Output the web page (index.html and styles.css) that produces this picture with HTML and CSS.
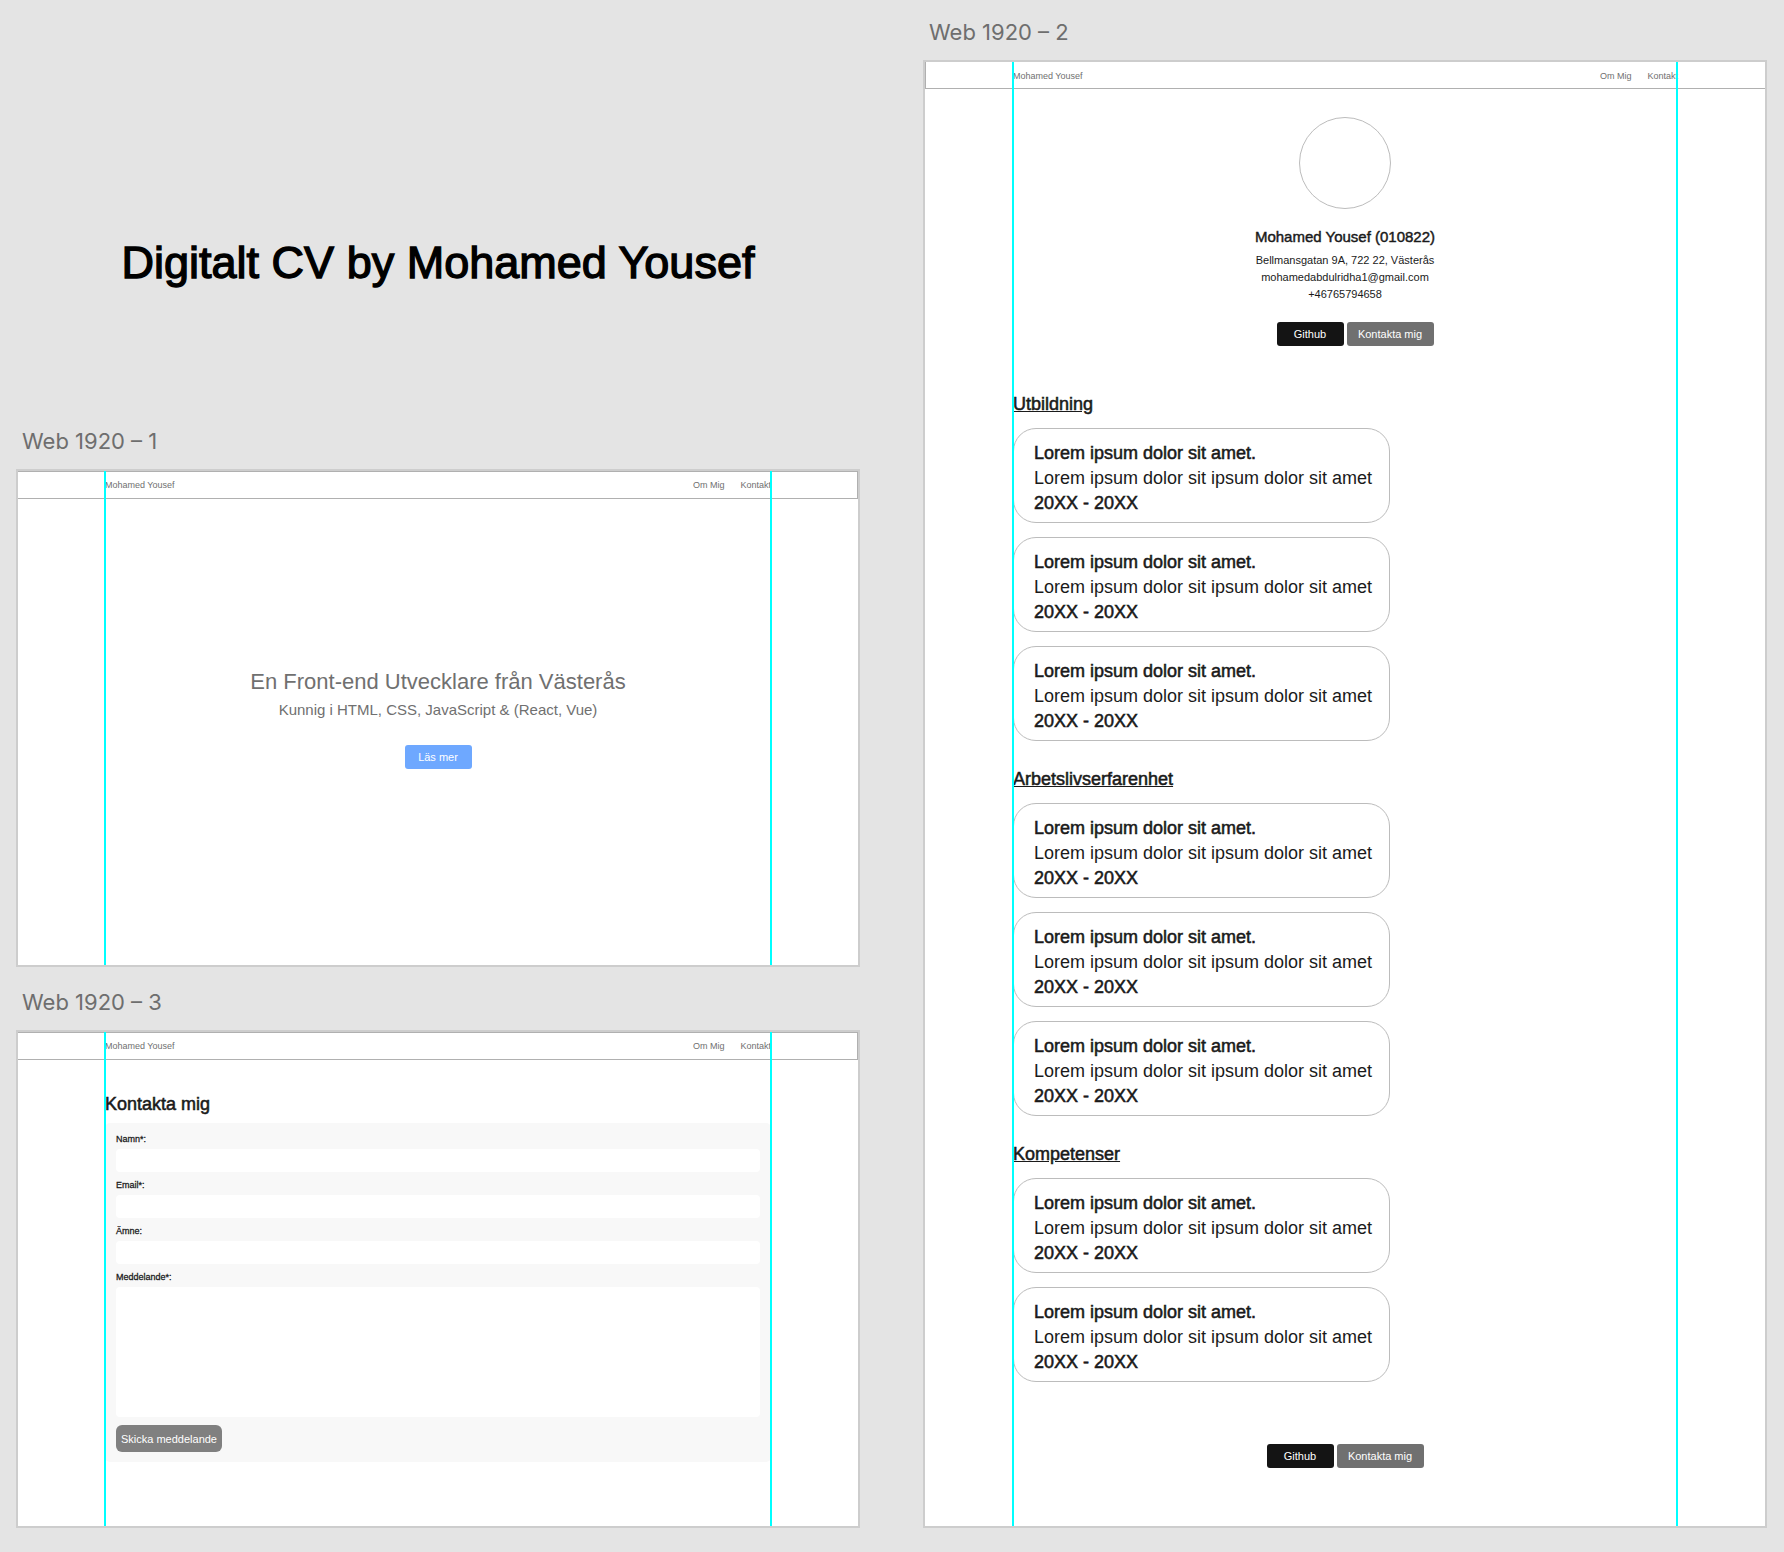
FILE: index.html
```html
<!DOCTYPE html>
<html lang="sv">
<head>
<meta charset="utf-8">
<meta name="viewport" content="width=device-width, initial-scale=1">
<title>Digitalt CV by Mohamed Yousef</title>
<link rel="stylesheet" href="styles.css">
</head>
<body>
<main class="canvas">
  <div class="column">
    <h1 class="title">Digitalt CV by Mohamed Yousef</h1>

    <p class="board-label">Web 1920 – 1</p>
    <section class="board board-wide">
      <header class="topbar">
        <a class="topbar-link" href="#">Mohamed Yousef</a>
        <nav class="topnav">
          <a class="topbar-link" href="#om">Om Mig</a>
          <a class="topbar-link" href="#kontakt">Kontakt</a>
        </nav>
      </header>
      <div class="hero">
        <h2 class="hero-title">En Front-end Utvecklare från Västerås</h2>
        <p class="hero-text">Kunnig i HTML, CSS, JavaScript &amp; (React, Vue)</p>
        <button class="button button-blue" type="button">Läs mer</button>
      </div>
    </section>

    <p class="board-label board-label-next">Web 1920 – 3</p>
    <section class="board board-wide" id="kontakt">
      <header class="topbar">
        <a class="topbar-link" href="#">Mohamed Yousef</a>
        <nav class="topnav">
          <a class="topbar-link" href="#om">Om Mig</a>
          <a class="topbar-link" href="#kontakt">Kontakt</a>
        </nav>
      </header>
      <div class="contact">
        <h2 class="heading">Kontakta mig</h2>
        <form class="form">
          <div class="field">
            <label class="label" for="namn">Namn*:</label>
            <input class="input" id="namn" type="text">
          </div>
          <div class="field">
            <label class="label" for="email">Email*:</label>
            <input class="input" id="email" type="email">
          </div>
          <div class="field">
            <label class="label" for="amne">Ämne:</label>
            <input class="input" id="amne" type="text">
          </div>
          <div class="field">
            <label class="label" for="meddelande">Meddelande*:</label>
            <textarea class="input textarea" id="meddelande"></textarea>
          </div>
          <button class="button button-send" type="button">Skicka meddelande</button>
        </form>
      </div>
    </section>
  </div>

  <div class="column">
    <p class="board-label">Web 1920 – 2</p>
    <section class="board board-tall" id="om">
      <header class="topbar">
        <a class="topbar-link" href="#">Mohamed Yousef</a>
        <nav class="topnav">
          <a class="topbar-link" href="#om">Om Mig</a>
          <a class="topbar-link" href="#kontakt">Kontakt</a>
        </nav>
      </header>
      <div class="profile">
        <div class="avatar"></div>
        <h2 class="name">Mohamed Yousef (010822)</h2>
        <address class="address">Bellmansgatan 9A, 722 22, Västerås<br>mohamedabdulridha1@gmail.com<br>+46765794658</address>
        <div class="actions actions-profile">
          <button class="button button-dark" type="button">Github</button>
          <button class="button button-gray" type="button">Kontakta mig</button>
        </div>
      </div>
      <div class="resume">
        <section class="group">
          <h3 class="heading underlined">Utbildning</h3>
          <article class="card">
            <h4 class="card-title">Lorem ipsum dolor sit amet.</h4>
            <p class="card-text">Lorem ipsum dolor sit ipsum dolor sit amet</p>
            <p class="card-title">20XX - 20XX</p>
          </article>
          <article class="card">
            <h4 class="card-title">Lorem ipsum dolor sit amet.</h4>
            <p class="card-text">Lorem ipsum dolor sit ipsum dolor sit amet</p>
            <p class="card-title">20XX - 20XX</p>
          </article>
          <article class="card">
            <h4 class="card-title">Lorem ipsum dolor sit amet.</h4>
            <p class="card-text">Lorem ipsum dolor sit ipsum dolor sit amet</p>
            <p class="card-title">20XX - 20XX</p>
          </article>
        </section>
        <section class="group">
          <h3 class="heading underlined">Arbetslivserfarenhet</h3>
          <article class="card">
            <h4 class="card-title">Lorem ipsum dolor sit amet.</h4>
            <p class="card-text">Lorem ipsum dolor sit ipsum dolor sit amet</p>
            <p class="card-title">20XX - 20XX</p>
          </article>
          <article class="card">
            <h4 class="card-title">Lorem ipsum dolor sit amet.</h4>
            <p class="card-text">Lorem ipsum dolor sit ipsum dolor sit amet</p>
            <p class="card-title">20XX - 20XX</p>
          </article>
          <article class="card">
            <h4 class="card-title">Lorem ipsum dolor sit amet.</h4>
            <p class="card-text">Lorem ipsum dolor sit ipsum dolor sit amet</p>
            <p class="card-title">20XX - 20XX</p>
          </article>
        </section>
        <section class="group">
          <h3 class="heading underlined">Kompetenser</h3>
          <article class="card">
            <h4 class="card-title">Lorem ipsum dolor sit amet.</h4>
            <p class="card-text">Lorem ipsum dolor sit ipsum dolor sit amet</p>
            <p class="card-title">20XX - 20XX</p>
          </article>
          <article class="card">
            <h4 class="card-title">Lorem ipsum dolor sit amet.</h4>
            <p class="card-text">Lorem ipsum dolor sit ipsum dolor sit amet</p>
            <p class="card-title">20XX - 20XX</p>
          </article>
        </section>
      </div>
      <div class="actions">
        <button class="button button-dark" type="button">Github</button>
        <button class="button button-gray" type="button">Kontakta mig</button>
      </div>
    </section>
  </div>
</main>
</body>
</html>
```
FILE: styles.css
```css
* {
  box-sizing: border-box;
  margin: 0;
}

body {
  background: #e4e4e4;
  color: #1a1a1a;
  font-family: "Liberation Sans", Arial, sans-serif;
}

.canvas {
  display: grid;
  grid-template-columns: 1fr 1fr;
  gap: 63px;
  padding: 18px 17px 24px 16px;
}

.column {
  display: flex;
  flex-direction: column;
  min-width: 0;
}

/* Medium weight: the regular face with a thin outline */
.title,
.heading,
.name,
.label,
.card-title {
  font-weight: 400;
  -webkit-text-stroke: 0.03em currentColor;
}

.title {
  padding: 218px 0 137px;
  color: #000;
  font-size: 45px;
  line-height: 54px;
  text-align: center;
}

.board-label {
  margin-bottom: 14px;
  padding-left: 6px;
  color: #6e6e6e;
  font-family: Inter, sans-serif;
  font-size: 22px;
  line-height: 28px;
}

.board-label-next {
  margin-top: 21px;
}

/* Artboards with their column guides */
.board {
  --gutter: 86px;
  position: relative;
  display: flex;
  flex-direction: column;
  border: 2px solid #cdcdcd;
  background: #fff;
}

.board::after {
  content: "";
  position: absolute;
  inset: 0 var(--gutter);
  border: solid #0ff;
  border-width: 0 2px;
  pointer-events: none;
}

.board-wide {
  aspect-ratio: 844 / 498;
}

.board-tall {
  --gutter: 87px;
  flex: 1;
  padding-bottom: 58px;
}

.topbar {
  display: flex;
  align-items: center;
  justify-content: space-between;
  padding: 7px 86px 7px 87px;
  border: 1px solid #b0b0b0;
  border-left: 0;
}

.board-tall .topbar {
  padding: 8px 87px 6px;
  border-width: 0 0 1px 1px;
  border-left: 1px solid #b0b0b0;
}

.topbar-link {
  color: #707070;
  font-size: 9px;
  line-height: 12px;
  text-decoration: none;
}

.topnav {
  display: flex;
  gap: 16px;
}

.button {
  height: 24px;
  padding: 0;
  border: 0;
  border-radius: 3px;
  color: #fff;
  font-family: inherit;
  font-size: 11px;
  line-height: 16px;
}

.button-blue {
  width: 67px;
  margin-top: 24px;
  background: #6ea8ff;
}

.button-dark {
  width: 67px;
  background: #141414;
}

.button-gray {
  width: 87px;
  background: #707070;
}

.button-send {
  width: 106px;
  height: 27px;
  margin-top: 3px;
  border-radius: 6px;
  background: #808080;
}

.hero {
  display: flex;
  flex: 1;
  flex-direction: column;
  align-items: center;
  justify-content: center;
  padding-bottom: 27px;
  color: #707070;
}

.hero-title {
  margin-bottom: 3px;
  font-size: 22px;
  font-weight: 400;
  line-height: 28px;
}

.hero-text {
  font-size: 15px;
  line-height: 22px;
}

.contact {
  padding: 32px 87px 0;
}

.heading {
  font-size: 18px;
  line-height: 24px;
}

.underlined {
  text-decoration: underline;
}

.form {
  display: flex;
  flex-direction: column;
  align-items: flex-start;
  gap: 5px;
  margin-top: 7px;
  padding: 8px 11px 10px;
  border-radius: 5px;
  background: #f8f8f8;
}

.field {
  display: flex;
  flex-direction: column;
  gap: 2px;
  width: 100%;
}

.label {
  font-size: 9px;
  line-height: 16px;
}

.input {
  width: 100%;
  height: 23px;
  padding: 4px 8px;
  border: 0;
  border-radius: 4px;
  background: #fff;
  font-family: inherit;
  font-size: 11px;
}

.textarea {
  height: 130px;
  resize: none;
}

.profile {
  display: flex;
  flex-direction: column;
  align-items: center;
  padding-top: 28px;
  text-align: center;
}

.avatar {
  width: 92px;
  height: 92px;
  border: 1px solid #bcbcbc;
  border-radius: 50%;
}

.name {
  margin: 18px 0 5px;
  font-size: 15px;
  line-height: 20px;
}

.address {
  font-size: 11px;
  font-style: normal;
  line-height: 17px;
}

.actions {
  display: flex;
  justify-content: center;
  gap: 3px;
}

.actions-profile {
  padding: 19px 0 0 20px;
}

.resume {
  display: flex;
  flex-direction: column;
  gap: 26px;
  padding: 46px 88px 62px;
}

.group {
  display: flex;
  flex-direction: column;
  align-items: flex-start;
  gap: 14px;
}

.group .heading {
  margin-bottom: -2px;
}

.card {
  padding: 12px 17px 6px 20px;
  border: 1px solid #bcbcbc;
  border-radius: 23px;
  font-size: 18px;
  line-height: 25px;
}

.card-title {
  font-size: 18px;
}
```
